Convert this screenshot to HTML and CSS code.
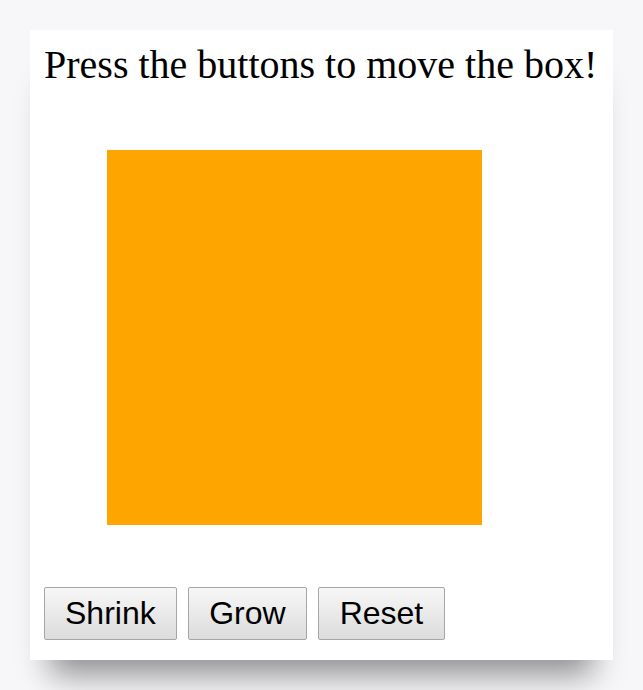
FILE: index.html
```html
<!DOCTYPE html>
<html>
<head>
<meta charset="utf-8">
<link rel="stylesheet" href="styles.css">
</head>
<body>
<div class="card">
  <p class="title">Press the buttons to move the box!</p>
  <div class="stage">
    <div class="box"></div>
  </div>
  <div class="controls">
    <button class="btn">Shrink</button>
    <button class="btn">Grow</button>
    <button class="btn">Reset</button>
  </div>
</div>
</body>
</html>
```
FILE: styles.css
```css
html, body {
  margin: 0;
  background: #f7f7fa;
}
body {
  padding: 30px;
  height: 690px;
  box-sizing: border-box;
  overflow: hidden;
}
.card {
  background: #ffffff;
  height: 630px;
  box-sizing: border-box;
  padding: 11px 14px 20px;
  box-shadow: 0 35px 30px -20px rgba(0, 0, 0, 0.42);
}
.title {
  margin: 0;
  font-family: "Liberation Serif", "Times New Roman", serif;
  font-size: 40px;
  color: #000;
}
.stage {
  padding: 62px 0 62px 63px;
}
.box {
  width: 375px;
  height: 375px;
  background: #ffa500;
}
.controls {
  display: flex;
  gap: 11px;
}
.btn {
  font-family: "Liberation Sans", Arial, sans-serif;
  font-size: 32px;
  color: #000;
  padding: 7px 20px;
  border: 1px solid #a6a6a6;
  border-radius: 2px;
  background: linear-gradient(#f7f7f7, #dcdcdc);
  margin: 0;
}
.btn + .btn {
  padding: 7px 20.5px;
}
```
